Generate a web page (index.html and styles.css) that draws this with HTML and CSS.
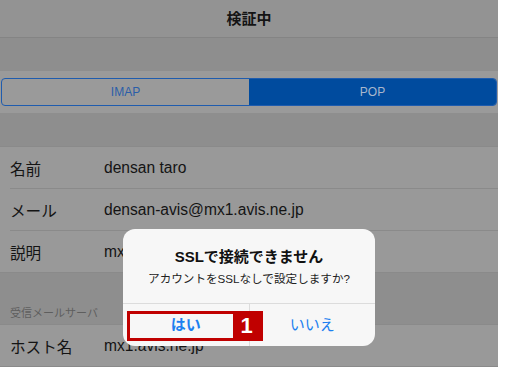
FILE: index.html
```html
<!DOCTYPE html>
<html lang="ja">
<head>
  <meta charset="UTF-8">
  <meta name="viewport" content="width=device-width, initial-scale=1.0">
  <title>検証中</title>
  <link rel="stylesheet" href="styles.css">
</head>
<body>

  <div class="screen">
    <div class="navbar">検証中</div>
    <div class="gap"></div>

    <div class="seg-row">
      <div class="segment">
        <div class="seg-item">IMAP</div>
        <div class="seg-item active">POP</div>
      </div>
    </div>

    <div class="gap"></div>

    <div class="group">
      <div class="row"><span class="label">名前</span><span class="value">densan taro</span></div>
      <div class="row"><span class="label">メール</span><span class="value">densan-avis@mx1.avis.ne.jp</span></div>
      <div class="row last"><span class="label">説明</span><span class="value">mx</span></div>
    </div>

    <div class="section-head">受信メールサーバ</div>

    <div class="group">
      <div class="row last"><span class="label">ホスト名</span><span class="value">mx1.avis.ne.jp</span></div>
    </div>

    <!-- alert over the form -->
    <div class="alert">
      <div class="alert-body">
        <div class="alert-title">SSLで接続できません</div>
        <div class="alert-msg">アカウントをSSLなしで設定しますか?</div>
      </div>
      <div class="alert-buttons">
        <div class="alert-btn bold">はい</div>
        <div class="alert-btn">いいえ</div>
      </div>
    </div>

    <div class="callout">
      <span class="callout-num">1</span>
    </div>
  </div>

</body>
</html>
```

FILE: styles.css
```css
body {
  margin: 0;
  padding: 0;
  background: #ffffff;
  font-family: "Liberation Sans", "Noto Sans CJK JP", sans-serif;
}

.screen {
  position: relative;
  width: 498px;
  height: 367px;
  overflow: hidden;
  background: #8e8e8e;
  color: #141414;
}

.navbar {
  height: 37px;
  line-height: 37px;
  text-align: center;
  font-size: 15px;
  font-weight: bold;
  background: #939393;
  border-bottom: 1px solid #848484;
}

.gap {
  height: 33px;
}

.seg-row {
  height: 42px;
  padding: 7px 1px;
  box-sizing: border-box;
  background: #9a9a9a;
}

.segment {
  display: flex;
  height: 28px;
  border: 1px solid #1f5cae;
  border-radius: 4px;
  box-sizing: border-box;
  overflow: hidden;
}

.seg-item {
  flex: 1;
  text-align: center;
  line-height: 26px;
  font-size: 12px;
  color: #2a5ea8;
}

.seg-item.active {
  background: #004b9e;
  color: #a9b7cc;
}

.group {
  background: #999999;
  border-top: 1px solid #8a8a8a;
  border-bottom: 1px solid #8a8a8a;
}

.row {
  display: flex;
  align-items: center;
  height: 41px;
  margin-left: 10px;
  border-bottom: 1px solid #8a8a8a;
  font-size: 15.6px;
}

.row.last {
  border-bottom: none;
}

.label {
  width: 94px;
}

.section-head {
  height: 51px;
  box-sizing: border-box;
  padding: 31px 0 0 10px;
  font-size: 11px;
  color: #5e5e5e;
}

.alert {
  position: absolute;
  left: 123px;
  top: 229px;
  width: 252px;
  height: 117px;
  background: #f7f7f7;
  border-radius: 12px;
  overflow: hidden;
  text-align: center;
}

.alert-body {
  height: 75px;
  padding-top: 18px;
  box-sizing: border-box;
  border-bottom: 1px solid #dcdcdc;
}

.alert-title {
  font-size: 15px;
  font-weight: bold;
  color: #111111;
  line-height: 20px;
}

.alert-msg {
  font-size: 11.6px;
  color: #222222;
  margin-top: 3px;
}

.alert-buttons {
  display: flex;
  height: 42px;
}

.alert-btn {
  flex: 1;
  line-height: 42px;
  font-size: 15px;
  color: #1c80f0;
}

.alert-btn + .alert-btn {
  border-left: 1px solid #dcdcdc;
}

.alert-btn.bold {
  font-weight: bold;
}

.callout {
  position: absolute;
  left: 127px;
  top: 311px;
  width: 136px;
  height: 30px;
  border: 3px solid #c00000;
  box-sizing: border-box;
  display: flex;
  justify-content: flex-end;
}

.callout-num {
  width: 27px;
  background: #c00000;
  color: #ffffff;
  font-size: 22px;
  font-weight: bold;
  line-height: 24px;
  text-align: center;
}
```
